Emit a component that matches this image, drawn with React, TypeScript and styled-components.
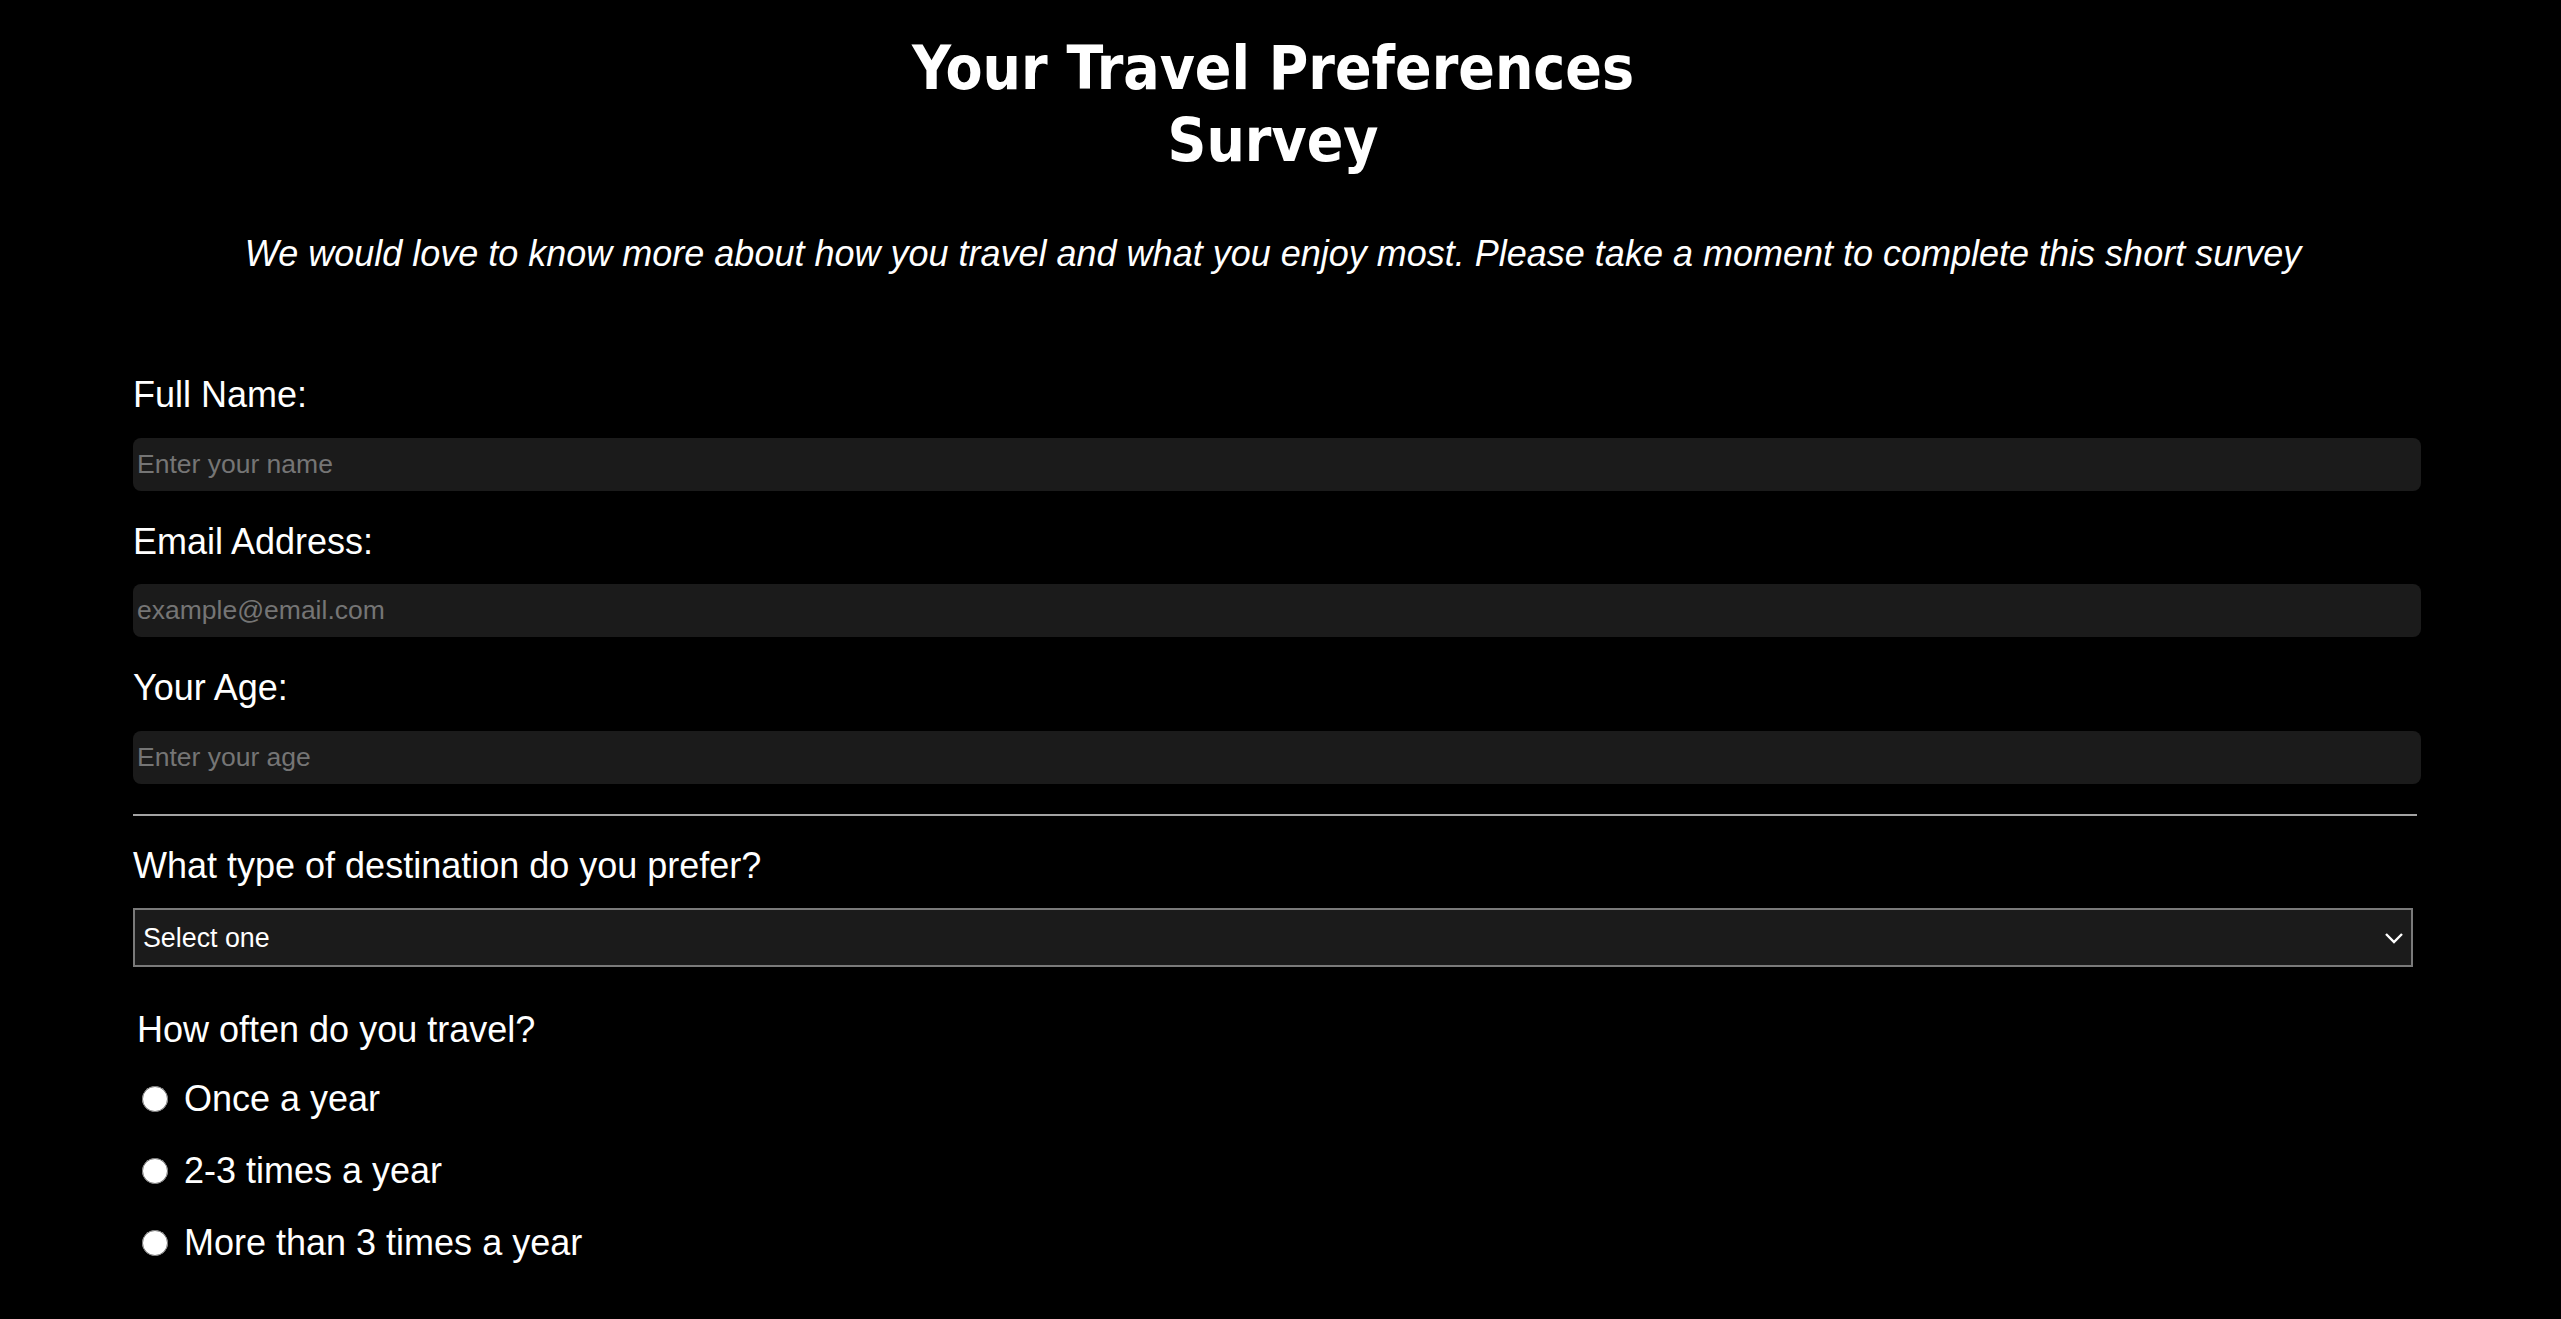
import React from "react";
import styled, { createGlobalStyle } from "styled-components";

const GlobalStyle = createGlobalStyle`
  html, body {
    margin: 0;
    padding: 0;
    background: #000;
    overflow: hidden;
  }
  body {
    font-family: "Liberation Sans", Arial, sans-serif;
    color: #fff;
  }
  * { box-sizing: border-box; }
`;

const Page = styled.div`
  width: 2546px;
  padding-top: 32px;
`;

const Title = styled.h1`
  margin: 0 auto;
  max-width: 800px;
  text-align: center;
  font-family: "DejaVu Sans Condensed", "DejaVu Sans", sans-serif;
  font-stretch: condensed;
  font-weight: bold;
  font-size: 60px;
  line-height: 72px;
  color: #fff;
`;

const Subtitle = styled.p`
  margin: 57px 0 0;
  text-align: center;
  font-style: italic;
  font-size: 36px;
  line-height: 41.4px;
`;

const Form = styled.form`
  width: 2280px;
  margin: 100px auto 0;
  display: flex;
  flex-direction: column;
`;

const Label = styled.label`
  display: block;
  font-size: 36px;
  line-height: 41.4px;
  margin-bottom: 22px;
`;

const TextInput = styled.input`
  display: block;
  width: calc(100% + 8px);
  height: 53px;
  padding: 0 4px;
  margin: 0 0 30px;
  border: none;
  border-radius: 8px;
  background: #1b1b1b;
  color: #fff;
  font-family: "Liberation Sans", Arial, sans-serif;
  font-size: 26.5px;
  outline: none;
  &::placeholder {
    color: #757575;
  }
`;

const Divider = styled.hr`
  width: calc(100% + 4px);
  margin: 0 0 29px;
  border: none;
  border-top: 2px solid #a3a3a3;
  height: 0;
`;

const SelectWrap = styled.div`
  position: relative;
  width: 100%;
  margin-bottom: 42px;
`;

const Select = styled.select`
  display: block;
  width: 100%;
  height: 59px;
  padding: 0 8px;
  border: 2px solid #7a7a7a;
  border-radius: 0;
  background: #1b1b1b;
  color: #fff;
  font-family: "Liberation Sans", Arial, sans-serif;
  font-size: 26.8px;
  appearance: none;
  -webkit-appearance: none;
  outline: none;
`;

const Chevron = styled.svg`
  position: absolute;
  right: 9px;
  top: 50%;
  width: 20px;
  height: 12px;
  margin-top: -6px;
  pointer-events: none;
`;

const Question = styled.div`
  font-size: 36px;
  line-height: 41.4px;
  padding-left: 4px;
`;

const Options = styled.div`
  display: flex;
  flex-direction: column;
  gap: 30.6px;
  padding-top: 28px;
`;

const Option = styled.label`
  display: flex;
  align-items: center;
  gap: 16px;
  height: 41.4px;
  font-size: 36px;
`;

const Radio = styled.input`
  width: 26px;
  height: 26px;
  margin: 0 0 0 9px;
  accent-color: #fff;
`;

const options = ["Once a year", "2-3 times a year", "More than 3 times a year"];

export default function App() {
  return (
    <>
      <GlobalStyle />
      <Page>
        <Title>Your Travel Preferences Survey</Title>
        <Subtitle>
          We would love to know more about how you travel and what you enjoy most. Please take a moment to complete this short survey
        </Subtitle>
        <Form onSubmit={(e) => e.preventDefault()}>
          <Label htmlFor="name">Full Name:</Label>
          <TextInput id="name" type="text" placeholder="Enter your name" />
          <Label htmlFor="email">Email Address:</Label>
          <TextInput id="email" type="email" placeholder="example@email.com" />
          <Label htmlFor="age">Your Age:</Label>
          <TextInput id="age" type="number" placeholder="Enter your age" />
          <Divider />
          <Label htmlFor="dest">What type of destination do you prefer?</Label>
          <SelectWrap>
            <Select id="dest" defaultValue="">
              <option value="">Select one</option>
              <option value="beach">Beach</option>
              <option value="mountains">Mountains</option>
              <option value="city">City</option>
            </Select>
            <Chevron viewBox="0 0 20 12">
              <path d="M2 2 L10 10 L18 2" fill="none" stroke="#fff" strokeWidth="2.4" />
            </Chevron>
          </SelectWrap>
          <Question>How often do you travel?</Question>
          <Options>
            {options.map((o) => (
              <Option key={o}>
                <Radio type="radio" name="freq" value={o} />
                {o}
              </Option>
            ))}
          </Options>
        </Form>
      </Page>
    </>
  );
}
